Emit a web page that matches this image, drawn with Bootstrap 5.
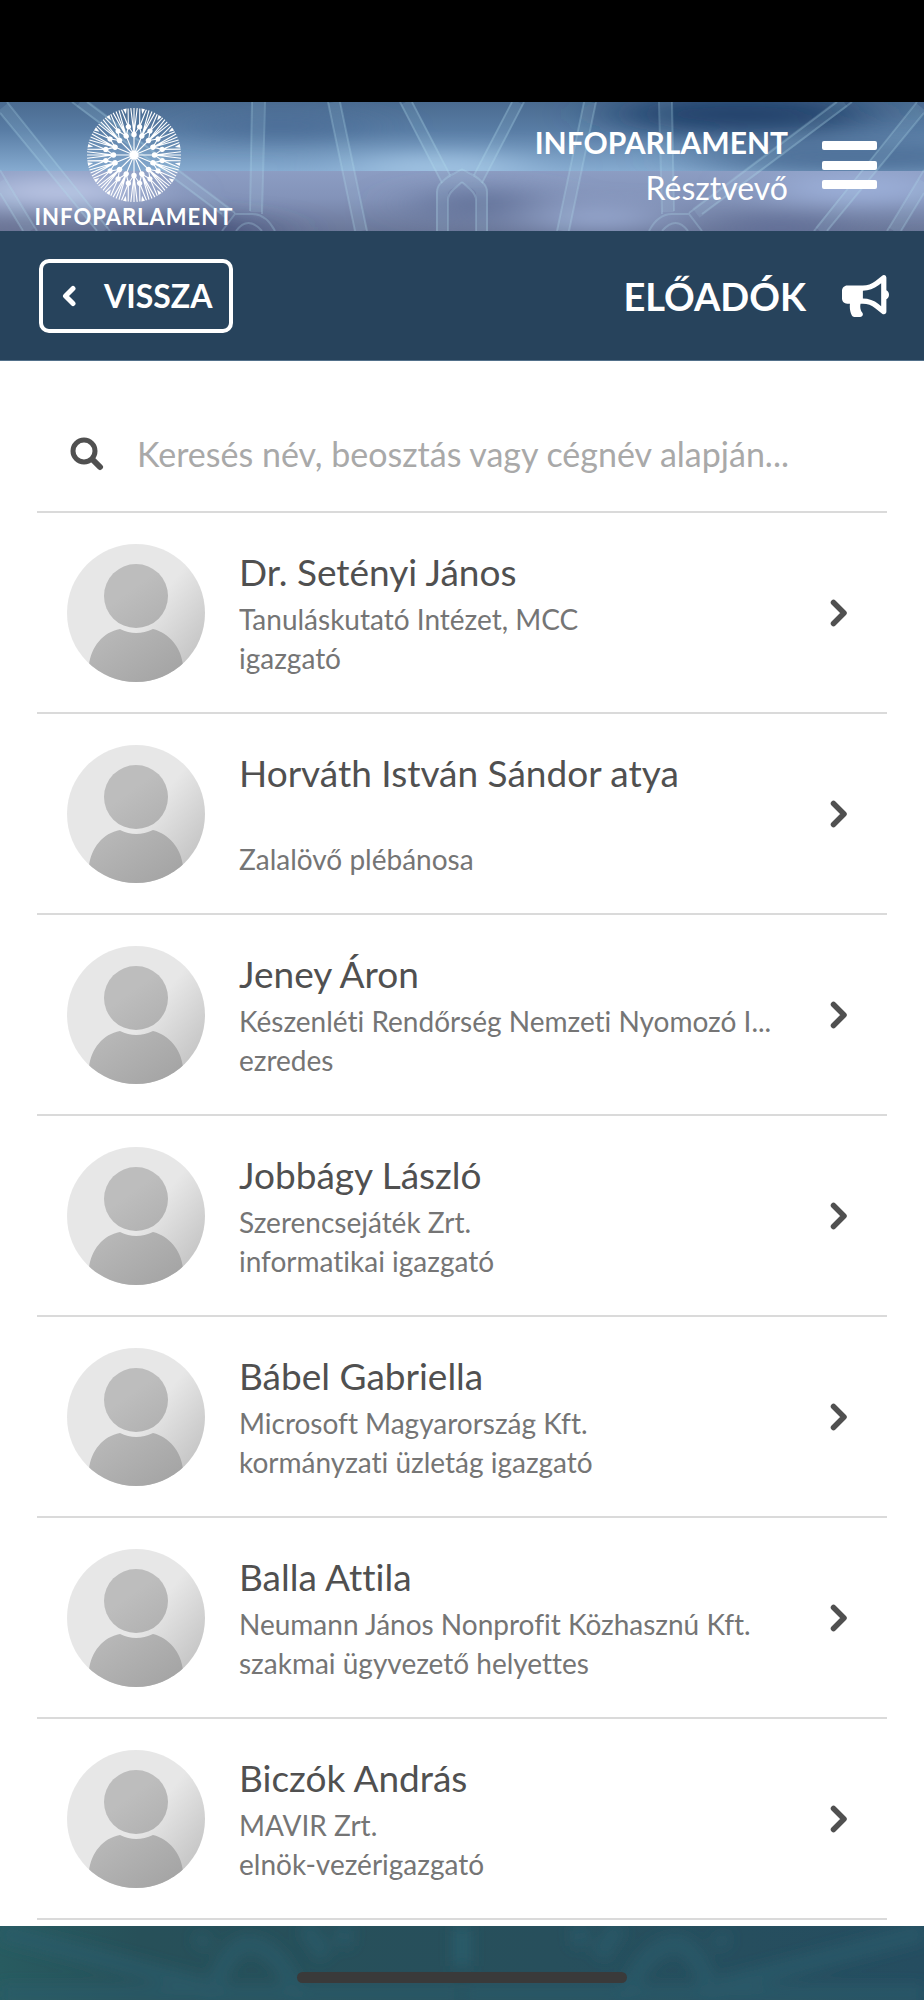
<!DOCTYPE html>
<html lang="hu">
<head>
<meta charset="utf-8">
<meta name="viewport" content="width=device-width, initial-scale=1">
<title>Infoparlament – Előadók</title>
<link href="https://cdn.jsdelivr.net/npm/bootstrap@5.3.0/dist/css/bootstrap.min.css" rel="stylesheet">
<style>
  body { font-family: "Trebuchet MS", Lato, sans-serif; font-variant-ligatures: none; color: #505050; background: #fff; }
  .status-strip { height: 102px; background: #000; }
  .app-head { height: 129px; background: #7186ab; padding: 0 47px 0 34px; }
  .head-art { z-index: 0; }
  .brand { width: 200px; padding-top: 5px; z-index: 1; }
  .brand-name { font: 700 22px/28px Lato, sans-serif; letter-spacing: 1px; }
  .head-right { z-index: 1; gap: 34px; padding-bottom: 3px; }
  .head-text { font-size: 32px; line-height: 45px; }
  .head-org { font-size: 30px; }
  .title-bar { height: 130px; background: #27435c; padding: 0 35px 0 39px; border-bottom: 1px solid #52708a; }
  .back-btn { width: 194px; height: 74px; border: 4px solid #fff; border-radius: 10px; gap: 27px; padding: 0 18px; font-size: 32px; line-height: 40px; }
  .page-title { font-size: 38px; line-height: 48px; margin-right: 12px; }
  .page-main { padding: 38px 37px 6px; }
  .search-row { height: 114px; padding: 0 32px 2px 33px; gap: 33px; border-bottom: 2px solid #dadada; }
  .search-box { font-size: 34px; line-height: 44px; color: #505050; outline: 0; }
  .search-box::placeholder { color: #a9a9a9; opacity: 1; }
  .person { height: 201px; padding: 0 39px 0 30px; border-bottom: 2px solid #dadada; color: #757575; }
  .person-text { margin-left: 34px; margin-right: 48px; font-size: 28px; line-height: 39px; }
  .person-name { font-size: 37px; line-height: 48px; margin-bottom: 4px; color: #505050; }
  .sub-line { min-height: 39px; }
  .app-foot { height: 74px; background: #27535f; padding-top: 46px; }
  .home-pill { width: 330px; height: 11px; background: #3a3a3a; z-index: 1; }
</style>
</head>
<body>
<svg width="0" height="0" class="position-absolute" aria-hidden="true">
  <defs>
    <linearGradient id="avBg" x1="0" y1="0.1" x2="1" y2="0.9"><stop offset=".55" stop-color="#e7e7e7"/><stop offset="1" stop-color="#bdbdbd"/></linearGradient>
    <linearGradient id="avFg" gradientUnits="userSpaceOnUse" x1="30" y1="40" x2="100" y2="138"><stop offset=".2" stop-color="#bdbdbd"/><stop offset="1" stop-color="#a4a4a4"/></linearGradient>
    <clipPath id="avClip"><circle cx="69" cy="69" r="69"/></clipPath>
    <symbol id="avatar" viewBox="0 0 138 138">
      <circle cx="69" cy="69" r="69" fill="url(#avBg)"/>
      <g clip-path="url(#avClip)" fill="url(#avFg)">
        <circle cx="69" cy="52" r="32"/>
        <path d="M22 138V121C24 103 36 88 53 85Q69 93 86 85C102 89 114 103 116 121V138Z"/>
      </g>
    </symbol>
    <symbol id="next" viewBox="0 0 18 28"><path d="M3.500 3.500 14 14 3.500 24.500" fill="none" stroke="#505050" stroke-width="5.500" stroke-linecap="round" stroke-linejoin="round"/></symbol>
  </defs>
</svg>

<div class="status-strip"></div>

<header class="app-head position-relative overflow-hidden d-flex justify-content-between text-white">
  <svg class="head-art position-absolute top-0 start-0 w-100 h-100" viewBox="0 0 924 129" preserveAspectRatio="none" aria-hidden="true">
    <defs>
      <linearGradient id="sky" x1="0" y1="0" x2="0" y2="1"><stop offset="0" stop-color="#4a6b90"/><stop offset=".4" stop-color="#587ca4"/><stop offset="1" stop-color="#86abd0"/></linearGradient>
      <linearGradient id="dusk" x1="0" y1="0" x2="0" y2="1"><stop offset="0" stop-color="#8c9dc3"/><stop offset=".45" stop-color="#8393b9"/><stop offset="1" stop-color="#6a7799"/></linearGradient>
      <filter id="soft" x="-50%" y="-100%" width="200%" height="300%"><feGaussianBlur stdDeviation="34 11"/></filter>
      <clipPath id="upper"><rect width="924" height="69"/></clipPath>
      <clipPath id="lower"><rect y="69" width="924" height="60"/></clipPath>
      <g id="ribs">
        <path d="M0 11 97 129M7 0 110 129M72 0 222 112M87 0 235 111M0 68 37 129M0 91 23 129"/>
        <path d="M252 0 250 109M265 0 262 112M328 0 355 129M340 0 367 129M400 0 442 81M412 0 450 73"/>
        <path d="M222 129 235 112H252Q266 112 275 129M236 129Q248 113 262 129"/>
        <path d="M437 129V90Q437 84 442 80Q448 74 453 72L462 67M448 129V98Q448 93 453 88L462 80"/>
      </g>
    </defs>
    <rect width="924" height="69" fill="url(#sky)"/>
    <rect y="69" width="924" height="60" fill="url(#dusk)"/>
    <g clip-path="url(#upper)"><g filter="url(#soft)">
      <ellipse cx="740" cy="12" rx="130" ry="20" fill="#22426c"/>
      <ellipse cx="280" cy="24" rx="90" ry="10" fill="#4a6b94"/>
      <ellipse cx="440" cy="66" rx="90" ry="12" fill="#a6c8e6"/>
      <ellipse cx="860" cy="55" rx="170" ry="18" fill="#4d7098"/>
    </g></g>
    <g clip-path="url(#lower)"><g filter="url(#soft)">
      <ellipse cx="60" cy="90" rx="90" ry="14" fill="#c0cae8"/>
      <ellipse cx="190" cy="130" rx="80" ry="14" fill="#414c74"/>
      <ellipse cx="20" cy="128" rx="50" ry="12" fill="#6c7293"/>
      <ellipse cx="480" cy="102" rx="60" ry="14" fill="#5f6e95"/>
      <ellipse cx="600" cy="116" rx="70" ry="10" fill="#a2b4dc"/>
      <ellipse cx="860" cy="86" rx="90" ry="14" fill="#9fb2dc"/>
      <ellipse cx="780" cy="126" rx="60" ry="10" fill="#5d6b95"/>
    </g></g>
    <g fill="none" stroke="#b5e0ee" stroke-opacity=".25" stroke-width="2">
      <use href="#ribs"/>
      <use href="#ribs" transform="translate(924 0) scale(-1 1)"/>
    </g>
    <g fill="none" stroke="#b8dcec" stroke-opacity=".12" stroke-width="12">
      <path d="M3 5 104 129M80 0 228 111M0 80 30 129M258 0 256 110M334 0 361 129M406 0 446 77"/>
      <path d="M921 5 820 129M844 0 696 111M924 80 894 129M666 0 668 110M590 0 563 129M518 0 478 77"/>
      <path d="M442 129V91Q442 86 448 82L462 74 476 82Q482 86 482 91V129"/>
    </g>
  </svg>

  <a href="#" class="brand position-relative text-white text-decoration-none text-center">
    <svg class="d-block mx-auto" width="96" height="96" viewBox="-48 -48 96 96" aria-hidden="true">
      <defs>
        <g id="ray">
          <path d="M0 0V-47M0-20.500-3.200-46.900M0-20.500 3.200-46.900M0-20.500 5.600-28.200M0-20.500-5.600-28.200M5.600-28.200 5.800-46.600M5.600-28.200 12.400-45.300" fill="none" stroke="#fff" stroke-width="1.100"/>
          <circle cy="-20.500" r="2.700" fill="#fff"/>
          <circle cx="5.600" cy="-28.200" r="2.600" fill="#fff"/>
          <path d="M7.400-46.400 11-45.700 8.200-40.800Z" fill="#fff"/>
        </g>
      </defs>
      <use href="#ray"/><use href="#ray" transform="rotate(22.500)"/><use href="#ray" transform="rotate(45)"/><use href="#ray" transform="rotate(67.500)"/>
      <use href="#ray" transform="rotate(90)"/><use href="#ray" transform="rotate(112.500)"/><use href="#ray" transform="rotate(135)"/><use href="#ray" transform="rotate(157.500)"/>
      <use href="#ray" transform="rotate(180)"/><use href="#ray" transform="rotate(202.500)"/><use href="#ray" transform="rotate(225)"/><use href="#ray" transform="rotate(247.500)"/>
      <use href="#ray" transform="rotate(270)"/><use href="#ray" transform="rotate(292.500)"/><use href="#ray" transform="rotate(315)"/><use href="#ray" transform="rotate(337.500)"/>
      <circle r="4.500" fill="#fff"/>
    </svg>
    <div class="brand-name text-nowrap">INFOPARLAMENT</div>
  </a>

  <div class="head-right position-relative d-flex align-items-center">
    <div class="head-text text-end">
      <div class="head-org fw-bold">INFOPARLAMENT</div>
      <div>Résztvevő</div>
    </div>
    <button type="button" class="btn p-0 border-0 d-flex" aria-label="Menü">
      <svg width="55" height="49" viewBox="0 0 55 49" fill="#fff"><rect width="55" height="9" rx="2"/><rect y="20" width="55" height="9" rx="2"/><rect y="39" width="55" height="9" rx="2"/></svg>
    </button>
  </div>
</header>

<div class="title-bar d-flex align-items-center justify-content-between text-white">
  <button type="button" class="back-btn btn d-flex align-items-center fw-bold text-white">
    <svg class="flex-shrink-0" width="16" height="22" viewBox="0 0 16 22" aria-hidden="true"><path d="M12 3.500 4.500 11 12 18.500" fill="none" stroke="#fff" stroke-width="5" stroke-linecap="round" stroke-linejoin="round"/></svg>
    <span>VISSZA</span>
  </button>
  <div class="d-flex align-items-center gap-4">
    <h1 class="page-title fw-bold mb-0">ELŐADÓK</h1>
    <svg width="47" height="42" viewBox="0 0 576 512" fill="#fff" aria-hidden="true"><path d="M576 240c0-23.630-12.950-44.040-32-55.120V32.010C544 23.260 537.020 0 512 0c-7.120 0-14.190 2.380-19.980 7.020l-85.030 68.030C364.280 109.190 310.660 128 256 128H64c-35.350 0-64 28.650-64 64v96c0 35.350 28.650 64 64 64h33.700c-1.390 10.480-2.180 21.140-2.180 32 0 39.770 9.260 77.350 25.560 110.940 5.190 10.690 16.520 17.060 28.400 17.060h74.280c26.050 0 41.690-29.840 25.900-50.560-16.400-21.520-26.150-48.360-26.150-77.440 0-11.110 1.620-21.790 4.410-32H256c54.660 0 108.280 18.810 150.980 52.950l85.030 68.030a32.023 32.023 0 0 0 19.980 7.020c24.920 0 32-22.780 32-32V295.130C563.050 284.040 576 263.630 576 240zm-96 141.420l-33.050-26.440C392.950 311.780 325.120 288 256 288v-96c69.120 0 136.950-23.780 190.950-66.980L480 98.580v282.840z"/></svg>
  </div>
</div>

<main class="page-main">
  <div class="search-row d-flex align-items-center">
    <label for="search" class="d-flex" aria-label="Keresés"><svg width="34" height="34" viewBox="0 0 34 34" fill="none" stroke="#505050"><circle cx="14" cy="14" r="11" stroke-width="5"/><path d="M22.500 22.500 30 30" stroke-width="6" stroke-linecap="round"/></svg></label>
    <input id="search" type="text" class="search-box flex-grow-1 border-0 p-0 bg-transparent" placeholder="Keresés név, beosztás vagy cégnév alapján...">
  </div>

  <nav aria-label="Előadók">
    <a href="#" class="person d-flex align-items-center text-decoration-none">
      <svg class="flex-shrink-0" width="138" height="138" aria-hidden="true"><use href="#avatar"/></svg>
      <div class="person-text flex-grow-1 overflow-hidden"><div class="person-name">Dr. Setényi János</div><div class="sub-line text-truncate">Tanuláskutató Intézet, MCC</div><div class="sub-line">igazgató</div></div>
      <svg class="flex-shrink-0" width="18" height="28" aria-hidden="true"><use href="#next"/></svg>
    </a>
    <a href="#" class="person d-flex align-items-center text-decoration-none">
      <svg class="flex-shrink-0" width="138" height="138" aria-hidden="true"><use href="#avatar"/></svg>
      <div class="person-text flex-grow-1 overflow-hidden"><div class="person-name">Horváth István Sándor atya</div><div class="sub-line"></div><div class="sub-line">Zalalövő plébánosa</div></div>
      <svg class="flex-shrink-0" width="18" height="28" aria-hidden="true"><use href="#next"/></svg>
    </a>
    <a href="#" class="person d-flex align-items-center text-decoration-none">
      <svg class="flex-shrink-0" width="138" height="138" aria-hidden="true"><use href="#avatar"/></svg>
      <div class="person-text flex-grow-1 overflow-hidden"><div class="person-name">Jeney Áron</div><div class="sub-line text-truncate">Készenléti Rendőrség Nemzeti Nyomozó I...</div><div class="sub-line">ezredes</div></div>
      <svg class="flex-shrink-0" width="18" height="28" aria-hidden="true"><use href="#next"/></svg>
    </a>
    <a href="#" class="person d-flex align-items-center text-decoration-none">
      <svg class="flex-shrink-0" width="138" height="138" aria-hidden="true"><use href="#avatar"/></svg>
      <div class="person-text flex-grow-1 overflow-hidden"><div class="person-name">Jobbágy László</div><div class="sub-line text-truncate">Szerencsejáték Zrt.</div><div class="sub-line">informatikai igazgató</div></div>
      <svg class="flex-shrink-0" width="18" height="28" aria-hidden="true"><use href="#next"/></svg>
    </a>
    <a href="#" class="person d-flex align-items-center text-decoration-none">
      <svg class="flex-shrink-0" width="138" height="138" aria-hidden="true"><use href="#avatar"/></svg>
      <div class="person-text flex-grow-1 overflow-hidden"><div class="person-name">Bábel Gabriella</div><div class="sub-line text-truncate">Microsoft Magyarország Kft.</div><div class="sub-line">kormányzati üzletág igazgató</div></div>
      <svg class="flex-shrink-0" width="18" height="28" aria-hidden="true"><use href="#next"/></svg>
    </a>
    <a href="#" class="person d-flex align-items-center text-decoration-none">
      <svg class="flex-shrink-0" width="138" height="138" aria-hidden="true"><use href="#avatar"/></svg>
      <div class="person-text flex-grow-1 overflow-hidden"><div class="person-name">Balla Attila</div><div class="sub-line text-truncate">Neumann János Nonprofit Közhasznú Kft.</div><div class="sub-line">szakmai ügyvezető helyettes</div></div>
      <svg class="flex-shrink-0" width="18" height="28" aria-hidden="true"><use href="#next"/></svg>
    </a>
    <a href="#" class="person d-flex align-items-center text-decoration-none">
      <svg class="flex-shrink-0" width="138" height="138" aria-hidden="true"><use href="#avatar"/></svg>
      <div class="person-text flex-grow-1 overflow-hidden"><div class="person-name">Biczók András</div><div class="sub-line text-truncate">MAVIR Zrt.</div><div class="sub-line">elnök-vezérigazgató</div></div>
      <svg class="flex-shrink-0" width="18" height="28" aria-hidden="true"><use href="#next"/></svg>
    </a>
  </nav>
</main>

<footer class="app-foot position-relative overflow-hidden">
  <svg class="position-absolute top-0 start-0 w-100 h-100" viewBox="0 0 924 74" preserveAspectRatio="none" aria-hidden="true">
    <defs>
      <linearGradient id="sea"><stop offset="0" stop-color="#285b60"/><stop offset=".15" stop-color="#275059"/><stop offset=".6" stop-color="#274f5c"/><stop offset="1" stop-color="#254d60"/></linearGradient>
      <filter id="haze" x="-20%" y="-50%" width="140%" height="200%"><feGaussianBlur stdDeviation="7"/></filter>
      <g id="waves"><path d="M0 6 205 60M210 80Q225 15 252 18Q285 25 300 80M305 0 325 30M205 10 200 20M0 68H460M462 0V40M345 0 343 20"/></g>
    </defs>
    <rect width="924" height="74" fill="url(#sea)"/>
    <g fill="none" stroke="#285e6d" stroke-width="17" stroke-opacity=".65" filter="url(#haze)"><use href="#waves"/><use href="#waves" transform="translate(924 0) scale(-1 1)"/></g>
  </svg>
  <div class="home-pill position-relative rounded-pill mx-auto"></div>
</footer>
<script src="https://cdn.jsdelivr.net/npm/bootstrap@5.3.0/dist/js/bootstrap.bundle.min.js"></script>
</body>
</html>
